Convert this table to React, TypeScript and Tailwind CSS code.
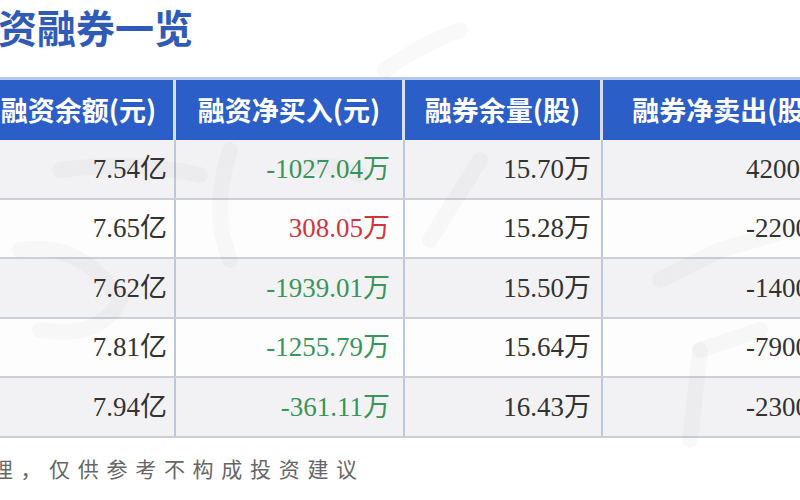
import React from "react";

const rows = [
  { a: "7.54亿", b: "-1027.04万", bc: "text-[#3a955a]", c: "15.70万", d: "4200" },
  { a: "7.65亿", b: "308.05万", bc: "text-[#d3343c]", c: "15.28万", d: "-2200" },
  { a: "7.62亿", b: "-1939.01万", bc: "text-[#3a955a]", c: "15.50万", d: "-1400" },
  { a: "7.81亿", b: "-1255.79万", bc: "text-[#3a955a]", c: "15.64万", d: "-7900" },
  { a: "7.94亿", b: "-361.11万", bc: "text-[#3a955a]", c: "16.43万", d: "-2300" },
];

const headers = ["融资余额(元)", "融资净买入(元)", "融券余量(股)", "融券净卖出(股)"];

const sans = { fontFamily: '"Noto Sans CJK SC", "Noto Sans", sans-serif' };
const serif = { fontFamily: '"Liberation Serif", "Noto Sans CJK SC", serif' };

export default function App() {
  return (
    <div className="relative w-[800px] h-[500px] overflow-hidden bg-white">
      <div className="pt-[1px] h-[77px]">
        <div
          className="ml-[-41px] text-[39px] leading-[50px] font-bold text-[#2f5bb7] whitespace-nowrap"
          style={sans}
        >
          融资融券一览
        </div>
      </div>

      <div className="ml-[-16px] w-[860px]">
        <div className="border-t-[3px] border-[#b3c8ec] grid grid-cols-[192px_229px_198px_241px] h-[63px] bg-[#2b5ec6]">
          {headers.map((h, i) => (
            <div
              key={h}
              className={`flex items-center justify-center text-white text-[27px] font-bold whitespace-nowrap ${
                i < 3 ? "border-r-[3px] border-[#d6e1f4]" : ""
              }`}
              style={sans}
            >
              {h}
            </div>
          ))}
        </div>
        {rows.map((r, i) => (
          <div
            key={i}
            className={`grid grid-cols-[192px_229px_198px_241px] h-[59.6px] border-b-[2px] border-[#cbd0d8] ${
              i % 2 === 0 ? "bg-[#f2f2f4]" : "bg-[#fdfdfd]"
            }`}
          >
            <div
              className="flex items-center justify-end pr-[7px] text-[27px] text-[#333] border-r-[2px] border-[#bcc8db]"
              style={serif}
            >
              {r.a}
            </div>
            <div
              className={`flex items-center justify-end pr-[13px] text-[27px] border-r-[2px] border-[#bcc8db] ${r.bc}`}
              style={serif}
            >
              {r.b}
            </div>
            <div
              className="flex items-center justify-end pr-[10px] text-[27px] text-[#333] border-r-[2px] border-[#bcc8db]"
              style={serif}
            >
              {r.c}
            </div>
            <div className="flex items-center justify-start pl-[143px] text-[27px] text-[#333] whitespace-nowrap" style={serif}>
              {r.d}
              <span className="ml-[2px]">万</span>
            </div>
          </div>
        ))}
      </div>

      <div className="pt-[15px]">
        <div
          className="ml-[-37px] text-[21px] leading-[30px] tracking-[7.7px] text-[#666] whitespace-nowrap"
          style={sans}
        >
          整理，仅供参考不构成投资建议
        </div>
      </div>

      <svg
        className="absolute inset-0 pointer-events-none"
        width="800"
        height="500"
        viewBox="0 0 800 500"
      >
        <g stroke="#000" strokeOpacity="0.022" strokeWidth="16" fill="none" strokeLinecap="round">
          <path d="M385 70 Q420 45 460 30" />
          <path d="M230 150 Q210 210 230 260" />
          <path d="M60 170 Q140 160 200 175" />
          <path d="M20 250 Q80 240 120 300 Q100 340 40 330" />
          <path d="M480 160 L430 240" />
          <path d="M660 280 L720 250 L790 230" />
          <path d="M700 350 L690 440" />
          <path d="M700 350 L760 330" />
          <path d="M300 170 Q330 160 360 175" />
        </g>
      </svg>
    </div>
  );
}
